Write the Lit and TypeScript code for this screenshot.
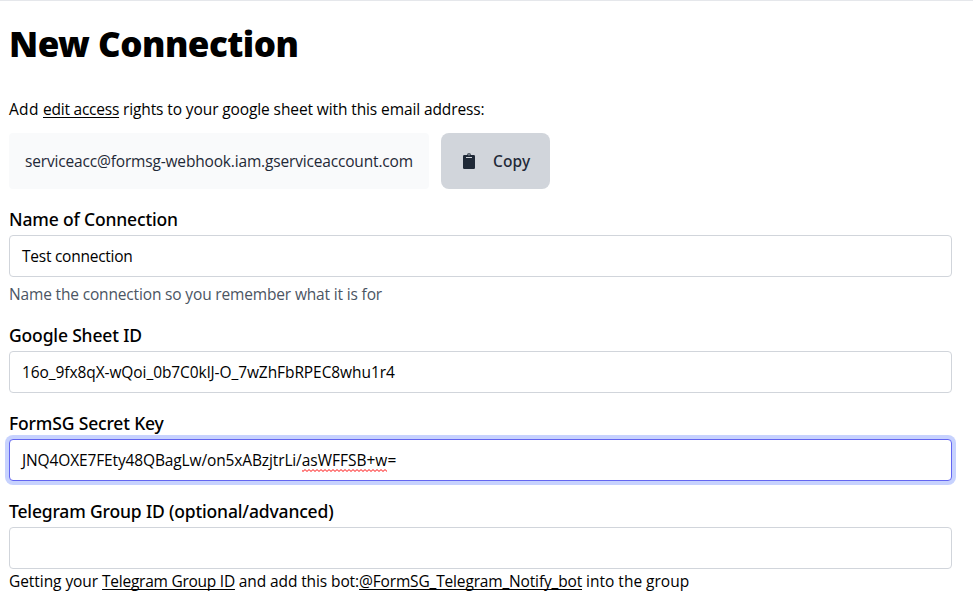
import { LitElement, html, css } from "lit";

class FormField extends LitElement {
  static properties = { label: {}, focused: { type: Boolean, reflect: true } };
  declare label: string;
  declare focused: boolean;

  static styles = css`
    :host { display: block; }
    .label {
      font: 500 17.5px/26px "Noto Sans", sans-serif;
      letter-spacing: -0.16px;
      height: 29px;
      color: #000;
    }
    .box {
      box-sizing: border-box;
      display: flex;
      align-items: center;
      height: 42px;
      padding: 0 12px;
      border: 1px solid #d1d5db;
      border-radius: 4px;
      background: #fff;
      white-space: nowrap;
    }
    :host([focused]) .box {
      border-color: #6366f1;
      box-shadow: 0 0 0 4px #c7d2fe;
    }
  `;
  render() {
    return html`<div class="label">${this.label}</div>
      <div class="box"><slot></slot></div>
      <slot name="help"></slot>`;
  }
}
customElements.define("form-field", FormField);

class AppRoot extends LitElement {
  static styles = css`
    :host {
      display: block;
      box-sizing: border-box;
      height: 614px;
      overflow: hidden;
      background: #fff;
      border-top: 1px solid #e5e7eb;
      padding: 23px 21px 0 9px;
      font: 15.5px/24px "Open Sans", "Noto Sans", sans-serif;
      color: #000;
    }
    h1 {
      margin: 0 0 33px;
      font: 900 35px/40px "Noto Sans", sans-serif;
      letter-spacing: -0.52px;
      white-space: nowrap;
      height: 40px;
    }
    .line { white-space: nowrap; }
    a {
      color: inherit;
      text-decoration: underline 1px;
      text-underline-offset: 2px;
      text-decoration-skip-ink: none;
    }
    .share { display: flex; gap: 12px; margin: 12px 0 17px; height: 56px; }
    .email {
      box-sizing: border-box;
      width: 420px;
      padding: 16px;
      border-radius: 4px;
      background: #f9fafb;
      color: #1f2937;
      letter-spacing: -0.17px;
      white-space: nowrap;
    }
    .copy {
      box-sizing: border-box;
      width: 109px;
      display: flex;
      align-items: center;
      gap: 18px;
      padding: 0 0 0 22px;
      border: 0;
      border-radius: 8px;
      background: #d1d5db;
      color: #1f2937;
      font: 500 15.5px/24px "Noto Sans", sans-serif;
      letter-spacing: 0.1px;
    }
    .copy svg { width: 12px; height: 16px; flex: none; }
    .fields { display: flex; flex-direction: column; gap: 17px; }
    .name { margin-bottom: -1px; }
    .help { margin-top: 5px; color: #4b5563; letter-spacing: -0.16px; white-space: nowrap; }
    .misspelt { position: relative; }
    .misspelt svg { position: absolute; left: 0; bottom: 0; width: 100%; height: 3px; }
    .t1 { letter-spacing: 0.3px; }
    .t2 { letter-spacing: -0.23px; }
    .t3 { letter-spacing: -0.11px; }
    .t4 { letter-spacing: -0.25px; }
    .t5 { letter-spacing: -0.08px; }
    .t6 { letter-spacing: -0.13px; }
    .t7 { letter-spacing: -0.16px; }
    .t8 { letter-spacing: -0.06px; }
  `;
  render() {
    return html`
      <h1>New Connection</h1>
      <div class="line"><span class="t1">Add </span><a class="t2">edit access</a><span class="t3"> rights to your google sheet with this email address:</span></div>
      <div class="share">
        <div class="email">serviceacc@formsg-webhook.iam.gserviceaccount.com</div>
        <button class="copy">
          <svg viewBox="0 0 12 16"><rect y="2" width="12" height="14" rx="1.2" fill="#1f2937"/><path d="M4 3V1.500Q4 0 6 0T8 1.500V3Z" fill="#1f2937" fill-opacity=".75"/><path d="M5.200 1.200h1.600v1.200H5.200z" fill="#9097a2"/><path d="M3 4h6v1H3z" fill="#d1d5db"/></svg>
          Copy
        </button>
      </div>
      <div class="fields">
        <form-field class="name" label="Name of Connection"><span class="t4">Test connection</span>
          <div class="help" slot="help">Name the connection so you remember what it is for</div>
        </form-field>
        <form-field label="Google Sheet ID"><span class="t5">16o_9fx8qX-wQoi_0b7C0klJ-O_7wZhFbRPEC8whu1r4</span></form-field>
        <form-field label="FormSG Secret Key" focused><span class="t6">JNQ4OXE7FEty48QBagLw/on5xABzjtrLi/</span><span class="misspelt">asWFFSB+w<svg><defs><pattern id="wave" width="4" height="3" patternUnits="userSpaceOnUse"><path d="M-1 .5L1 2.500L3 .5L5 2.500" fill="none" stroke="#f00" stroke-width="1"/></pattern></defs><rect width="100%" height="3" fill="url(#wave)"/></svg></span>=</form-field>
        <form-field label="Telegram Group ID (optional/advanced)"><div class="line" slot="help"><span class="t8">Getting your </span><a class="t4">Telegram Group ID</a><span class="t3"> and add this bot:</span><a class="t7">@FormSG_Telegram_Notify_bot</a><span> into the group</span></div></form-field>
      </div>`;
  }
}
customElements.define("app-root", AppRoot);
